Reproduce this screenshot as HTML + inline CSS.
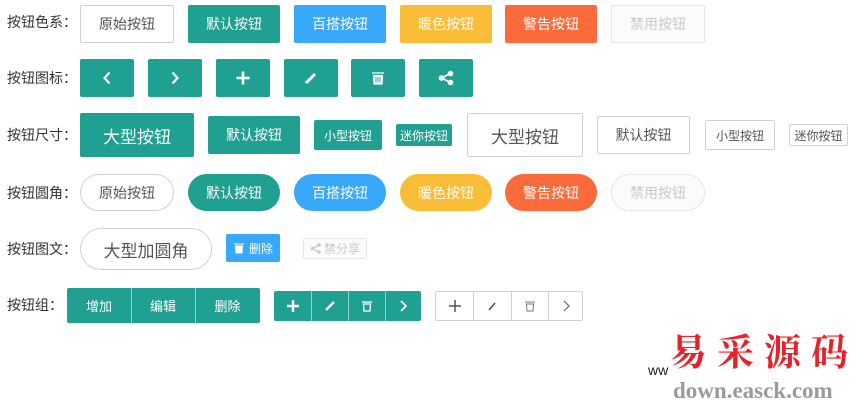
<!DOCTYPE html>
<html><head><meta charset="utf-8"><style>
*{margin:0;padding:0;box-sizing:border-box}
body{width:868px;height:410px;background:#fff;position:relative;overflow:hidden;font-family:"Liberation Sans","Noto Sans CJK SC",sans-serif;}
.l{position:absolute;left:7px;font-size:14px;color:#333;line-height:20px}
.b{position:absolute;display:flex;align-items:center;justify-content:center;border-radius:2px;font-size:14px;color:#fff;white-space:nowrap}
.g{background:#1fa090}.bl{background:#38a8fb}.o{background:#f9bd38}.r{background:#fb6a3b}
.p{background:#fff;border:1px solid #d2d2d2;color:#555}
.d{background:#fbfbfb;border:1px solid #e6e6e6;color:#c9c9c9}
.rd{border-radius:20px}
.sep{position:absolute;top:0;bottom:0;width:1px;background:rgba(255,255,255,.5)}
.sep2{position:absolute;top:0;bottom:0;width:1px;background:#d2d2d2}
.c{position:absolute;display:flex;align-items:center;justify-content:center;top:0;bottom:0}
</style></head><body>
<div class="l" style="top:12px">按钮色系：</div>
<div class="b p" style="left:80px;top:5px;width:94px;height:38px">原始按钮</div>
<div class="b g" style="left:188px;top:5px;width:92px;height:38px">默认按钮</div>
<div class="b bl" style="left:294px;top:5px;width:92px;height:38px">百搭按钮</div>
<div class="b o" style="left:400px;top:5px;width:92px;height:38px">暖色按钮</div>
<div class="b r" style="left:505px;top:5px;width:92px;height:38px">警告按钮</div>
<div class="b d" style="left:611px;top:5px;width:94px;height:38px">禁用按钮</div>

<div class="l" style="top:68px">按钮图标：</div>
<div class="b g" style="left:80px;top:59px;width:54px;height:38px"><svg width="16" height="16"><path d="M10.5 2.5L5.5 8L10.5 13.5" stroke="#fff" stroke-width="2.2" fill="none"/></svg></div>
<div class="b g" style="left:148px;top:59px;width:54px;height:38px"><svg width="16" height="16"><path d="M5.5 2.5L10.5 8L5.5 13.5" stroke="#fff" stroke-width="2.2" fill="none"/></svg></div>
<div class="b g" style="left:216px;top:59px;width:54px;height:38px"><svg width="16" height="16"><path d="M8 1.5V14.5M1.5 8H14.5" stroke="#fff" stroke-width="2.6"/></svg></div>
<div class="b g" style="left:284px;top:59px;width:54px;height:38px"><svg width="16" height="16"><path d="M3 13L12 4" stroke="#fff" stroke-width="3"/></svg></div>
<div class="b g" style="left:351px;top:59px;width:54px;height:38px"><svg width="16" height="16"><path d="M2 3H14M3.5 5.5H12.5L12 14H4Z" fill="#fff" stroke="#fff" stroke-width="1.2"/><path d="M6 7V12.5M8 7V12.5M10 7V12.5" stroke="#1fa090" stroke-width=".9"/></svg></div>
<div class="b g" style="left:419px;top:59px;width:54px;height:38px"><svg width="16" height="16"><circle cx="3.5" cy="8" r="2.8" fill="#fff"/><circle cx="12.5" cy="3.5" r="2.8" fill="#fff"/><circle cx="12.5" cy="12.5" r="2.8" fill="#fff"/><path d="M3.5 8L12.5 3.5M3.5 8L12.5 12.5" stroke="#fff" stroke-width="1.8"/></svg></div>

<div class="l" style="top:125px">按钮尺寸：</div>
<div class="b g" style="left:80px;top:113px;width:114px;height:44px;font-size:17px">大型按钮</div>
<div class="b g" style="left:208px;top:116px;width:92px;height:38px">默认按钮</div>
<div class="b g" style="left:314px;top:120px;width:68px;height:30px;font-size:12px">小型按钮</div>
<div class="b g" style="left:396px;top:124px;width:56px;height:22px;font-size:12px">迷你按钮</div>
<div class="b p" style="left:467px;top:113px;width:116px;height:44px;font-size:17px">大型按钮</div>
<div class="b p" style="left:597px;top:116px;width:93px;height:38px">默认按钮</div>
<div class="b p" style="left:705px;top:120px;width:70px;height:30px;font-size:12px">小型按钮</div>
<div class="b p" style="left:789px;top:124px;width:59px;height:22px;font-size:12px">迷你按钮</div>

<div class="l" style="top:183px">按钮圆角：</div>
<div class="b p rd" style="left:80px;top:174px;width:94px;height:37px">原始按钮</div>
<div class="b g rd" style="left:188px;top:174px;width:92px;height:37px">默认按钮</div>
<div class="b bl rd" style="left:294px;top:174px;width:92px;height:37px">百搭按钮</div>
<div class="b o rd" style="left:400px;top:174px;width:92px;height:37px">暖色按钮</div>
<div class="b r rd" style="left:505px;top:174px;width:92px;height:37px">警告按钮</div>
<div class="b d rd" style="left:611px;top:174px;width:94px;height:37px">禁用按钮</div>

<div class="l" style="top:239px">按钮图文：</div>
<div class="b p" style="left:80px;top:228px;width:132px;height:42px;border-radius:22px;font-size:17px">大型加圆角</div>
<div class="b bl" style="left:226px;top:234px;width:54px;height:28px;font-size:12px"><svg width="12" height="12" style="margin-right:4px"><path d="M1 2H11M2.5 4H9.5L9 11H3Z" fill="#fff" stroke="#fff"/></svg>删除</div>
<div class="b d" style="left:303px;top:238px;width:64px;height:21px;font-size:12px"><svg width="11" height="11" style="margin-right:3px"><circle cx="2.5" cy="5.5" r="1.8" fill="#ccc"/><circle cx="9" cy="2" r="1.8" fill="#ccc"/><circle cx="9" cy="9" r="1.8" fill="#ccc"/><path d="M2.5 5.5L9 2M2.5 5.5L9 9" stroke="#ccc" stroke-width="1.3"/></svg>禁分享</div>

<div class="l" style="top:295px">按钮组：</div>
<div class="b g" style="left:67px;top:288px;width:193px;height:35px;font-size:13px">
 <div class="c" style="left:0;width:64px">增加</div><div class="sep" style="left:64px"></div>
 <div class="c" style="left:64px;width:64px">编辑</div><div class="sep" style="left:128px"></div>
 <div class="c" style="left:128px;width:65px">删除</div></div>
<div class="b g" style="left:274px;top:291px;width:147px;height:30px">
 <div class="c" style="left:0;width:37px"><svg width="14" height="14"><path d="M7 1V13M1 7H13" stroke="#fff" stroke-width="2.4"/></svg></div><div class="sep" style="left:37px"></div>
 <div class="c" style="left:37px;width:37px"><svg width="12" height="12"><path d="M2 10L10 2" stroke="#fff" stroke-width="2.3"/></svg></div><div class="sep" style="left:74px"></div>
 <div class="c" style="left:74px;width:37px"><svg width="12" height="12"><path d="M1 2H11M2.5 4H9.5L9 11H3Z" fill="none" stroke="#fff" stroke-width="1.3"/></svg></div><div class="sep" style="left:111px"></div>
 <div class="c" style="left:111px;width:36px"><svg width="12" height="14"><path d="M4 2L9 7L4 12" stroke="#fff" stroke-width="1.8" fill="none"/></svg></div></div>
<div class="b p" style="left:435px;top:291px;width:148px;height:30px">
 <div class="c" style="left:0;width:37px"><svg width="14" height="14"><path d="M7 1V13M1 7H13" stroke="#555" stroke-width="1.5"/></svg></div><div class="sep2" style="left:37px"></div>
 <div class="c" style="left:37px;width:38px"><svg width="12" height="12"><path d="M3 10L9 3" stroke="#555" stroke-width="1.6"/></svg></div><div class="sep2" style="left:75px"></div>
 <div class="c" style="left:75px;width:37px"><svg width="12" height="12"><path d="M1 2H11M2.5 4H9.5L9 11H3Z" fill="none" stroke="#777" stroke-width="1"/></svg></div><div class="sep2" style="left:112px"></div>
 <div class="c" style="left:112px;width:35px"><svg width="12" height="14"><path d="M4 2L9 7L4 12" stroke="#666" stroke-width="1.2" fill="none"/></svg></div></div>

<div style="position:absolute;left:648px;top:362px;font-size:14px;color:#222">ww</div>
<div style="position:absolute;left:670px;top:327px;font-size:37px;font-weight:bold;color:#e8202a;letter-spacing:10px;font-family:'Noto Serif CJK SC',serif;line-height:44px">易采源码</div>
<div style="position:absolute;left:673px;top:378px;font-size:23px;font-weight:bold;color:#9a9a9a;font-family:'Liberation Serif',serif;line-height:26px">down.easck.com</div>
</body></html>
